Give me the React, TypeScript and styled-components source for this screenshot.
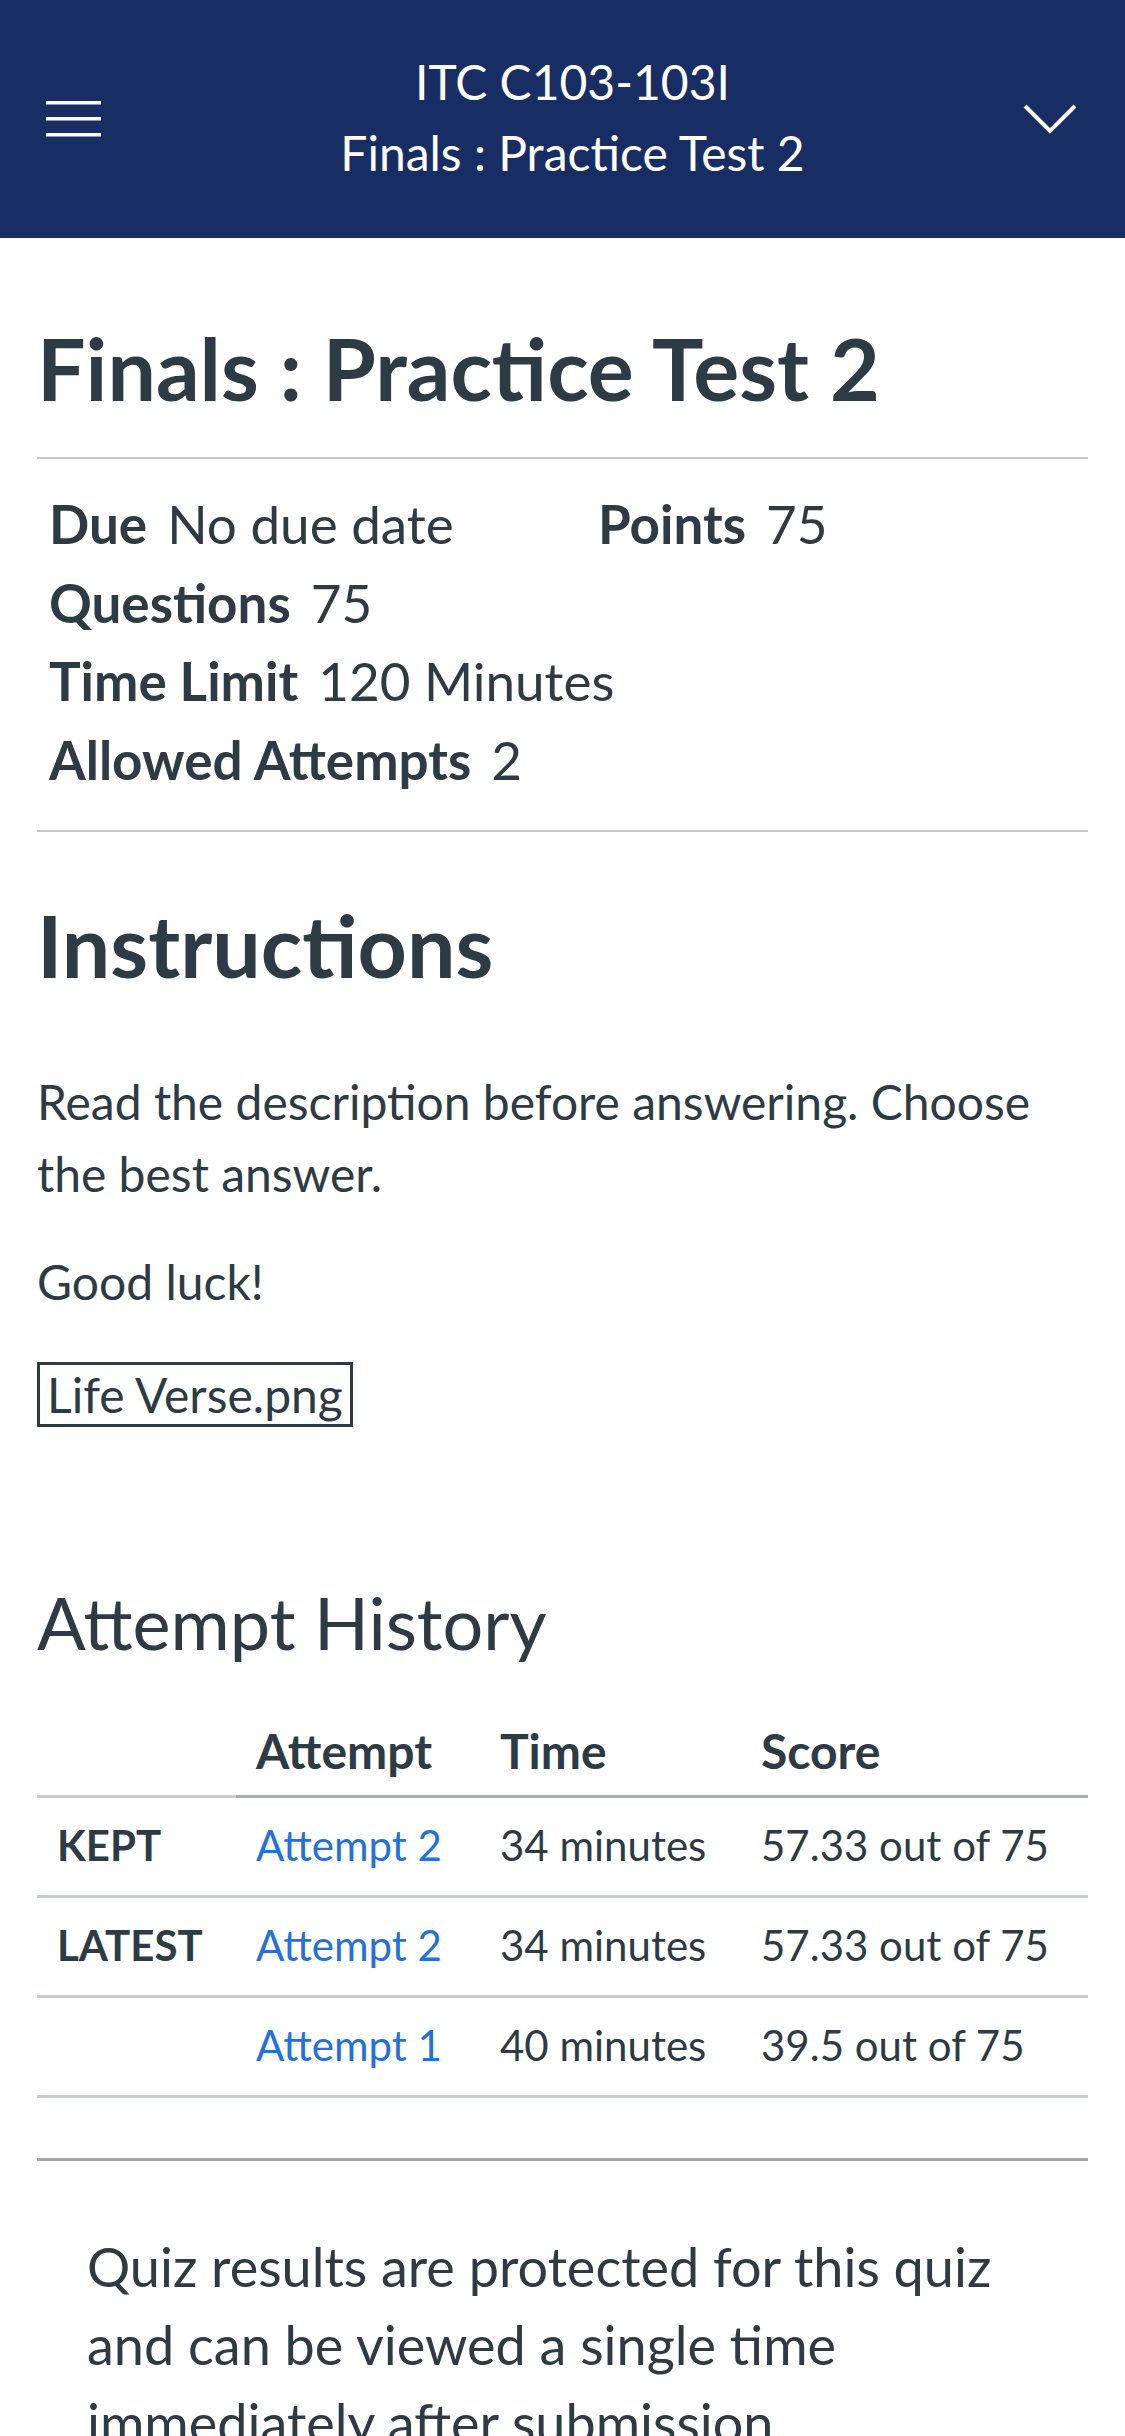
import React from "react";
import styled, { createGlobalStyle } from "styled-components";

const GlobalStyle = createGlobalStyle`
  html, body {
    margin: 0;
    padding: 0;
    background: #ffffff;
  }
  body {
    font-family: Lato, "Open Sans", "Liberation Sans", sans-serif;
    color: #2d3b45;
    -webkit-font-smoothing: antialiased;
  }
  * { box-sizing: border-box; }
`;

const Page = styled.div`
  width: 1125px;
  height: 2436px;
  overflow: hidden;
  background: #ffffff;
`;

const Header = styled.header`
  height: 238px;
  background: #172d63;
  display: flex;
  align-items: center;
  color: #ffffff;
`;

const HeaderSide = styled.div<{ $align: "left" | "right"; $w: number }>`
  width: ${(p) => p.$w}px;
  display: flex;
  justify-content: ${(p) => (p.$align === "left" ? "flex-start" : "flex-end")};
  padding-left: ${(p) => (p.$align === "left" ? 46 : 0)}px;
  padding-right: ${(p) => (p.$align === "right" ? 48 : 0)}px;
`;

const HeaderTitle = styled.div`
  flex: 1;
  text-align: center;
  font-size: 48px;
  line-height: 71px;
  margin-top: -5px;
`;

const Main = styled.main`
  padding: 0 37px;
`;

const H1 = styled.h1`
  font-size: 86px;
  line-height: 1.2;
  font-weight: 700;
  margin: 78px 0 38px;
`;

const Details = styled.ul`
  list-style: none;
  margin: 0;
  padding: 26px 0 31px 12px;
  border-top: 2px solid #c6c6c6;
  border-bottom: 2px solid #c6c6c6;
  display: grid;
  grid-template-columns: 549px 1fr;
`;

const DetailItem = styled.li<{ $full?: boolean }>`
  grid-column: ${(p) => (p.$full ? "1 / -1" : "auto")};
  display: flex;
  gap: 20px;
  font-size: 53px;
  line-height: 78.5px;
`;

const DetailLabel = styled.span`
  font-weight: 700;
`;

const H2 = styled.h2`
  font-size: 86px;
  line-height: 1.2;
  font-weight: 700;
  margin: 61px 0 70px;
`;

const Para = styled.p<{ $mt?: number }>`
  font-size: 48px;
  line-height: 72px;
  margin: ${(p) => p.$mt ?? 0}px 0 0;
`;

const FileBox = styled.span`
  display: inline-block;
  border: 3px solid #2d3b45;
  padding: 0 7px;
  line-height: 59px;
  font-size: 48px;
`;

const HistoryTitle = styled.h3`
  font-size: 72px;
  line-height: 1.2;
  font-weight: 400;
  margin: 148px 0 0;
`;

const Table = styled.table`
  width: 100%;
  border-collapse: collapse;
  margin-top: 40px;
`;

const Th = styled.th<{ $w: number; $light?: boolean }>`
  width: ${(p) => p.$w}px;
  text-align: left;
  font-size: 48px;
  font-weight: 700;
  padding: 0 0 0 20px;
  height: 91px;
  vertical-align: middle;
  border-bottom: 3px solid ${(p) => (p.$light ? "#c8cdd1" : "#a4acb3")};
`;

const Td = styled.td<{ $bold?: boolean }>`
  font-size: 42px;
  font-weight: ${(p) => (p.$bold ? 700 : 400)};
  padding: 0 0 4px 20px;
  height: 100px;
  vertical-align: middle;
  border-bottom: 3px solid #c8cdd1;
  white-space: nowrap;
`;

const AttemptLink = styled.a`
  color: #2471db;
  text-decoration: none;
`;

const Divider = styled.hr`
  border: none;
  height: 3px;
  background: #a6a6a6;
  margin: 60px 0 0;
`;

const Notice = styled.p`
  font-size: 54px;
  line-height: 77.7px;
  margin: 67px 0 0;
  padding: 0 50px;
`;

const MenuIcon = () => (
  <svg width="55" height="36" viewBox="0 0 55 36">
    <rect x="0" y="0" width="55" height="3.5" fill="#ffffff" />
    <rect x="0" y="16" width="55" height="3.5" fill="#ffffff" />
    <rect x="0" y="32" width="55" height="3.5" fill="#ffffff" />
  </svg>
);

const ChevronIcon = () => (
  <svg width="54" height="30" viewBox="0 0 54 30">
    <polyline
      points="2,2 27,27 52,2"
      fill="none"
      stroke="#ffffff"
      strokeWidth="4"
    />
  </svg>
);

const rows = [
  { tag: "KEPT", attempt: "Attempt 2", time: "34 minutes", score: "57.33 out of 75" },
  { tag: "LATEST", attempt: "Attempt 2", time: "34 minutes", score: "57.33 out of 75" },
  { tag: "", attempt: "Attempt 1", time: "40 minutes", score: "39.5 out of 75" },
];

export default function App() {
  return (
    <Page>
      <GlobalStyle />
      <Header>
        <HeaderSide $align="left" $w={150}>
          <MenuIcon />
        </HeaderSide>
        <HeaderTitle>
          <div>ITC C103-103I</div>
          <div>Finals : Practice Test 2</div>
        </HeaderTitle>
        <HeaderSide $align="right" $w={130}>
          <ChevronIcon />
        </HeaderSide>
      </Header>
      <Main>
        <H1>Finals : Practice Test 2</H1>
        <Details>
          <DetailItem>
            <DetailLabel>Due</DetailLabel>
            <span>No due date</span>
          </DetailItem>
          <DetailItem>
            <DetailLabel>Points</DetailLabel>
            <span>75</span>
          </DetailItem>
          <DetailItem $full>
            <DetailLabel>Questions</DetailLabel>
            <span>75</span>
          </DetailItem>
          <DetailItem $full>
            <DetailLabel>Time Limit</DetailLabel>
            <span>120 Minutes</span>
          </DetailItem>
          <DetailItem $full>
            <DetailLabel>Allowed Attempts</DetailLabel>
            <span>2</span>
          </DetailItem>
        </Details>
        <H2>Instructions</H2>
        <Para>Read the description before answering. Choose the best answer.</Para>
        <Para $mt={36}>Good luck!</Para>
        <Para $mt={41}>
          <FileBox>Life Verse.png</FileBox>
        </Para>
        <HistoryTitle>Attempt History</HistoryTitle>
        <Table>
          <thead>
            <tr>
              <Th $w={199} $light></Th>
              <Th $w={244}>Attempt</Th>
              <Th $w={261}>Time</Th>
              <Th $w={347}>Score</Th>
            </tr>
          </thead>
          <tbody>
            {rows.map((r, i) => (
              <tr key={i}>
                <Td $bold>{r.tag}</Td>
                <Td>
                  <AttemptLink href="#">{r.attempt}</AttemptLink>
                </Td>
                <Td>{r.time}</Td>
                <Td>{r.score}</Td>
              </tr>
            ))}
          </tbody>
        </Table>
        <Divider />
        <Notice>
          Quiz results are protected for this quiz and can be viewed a single time
          immediately after submission.
        </Notice>
      </Main>
    </Page>
  );
}
